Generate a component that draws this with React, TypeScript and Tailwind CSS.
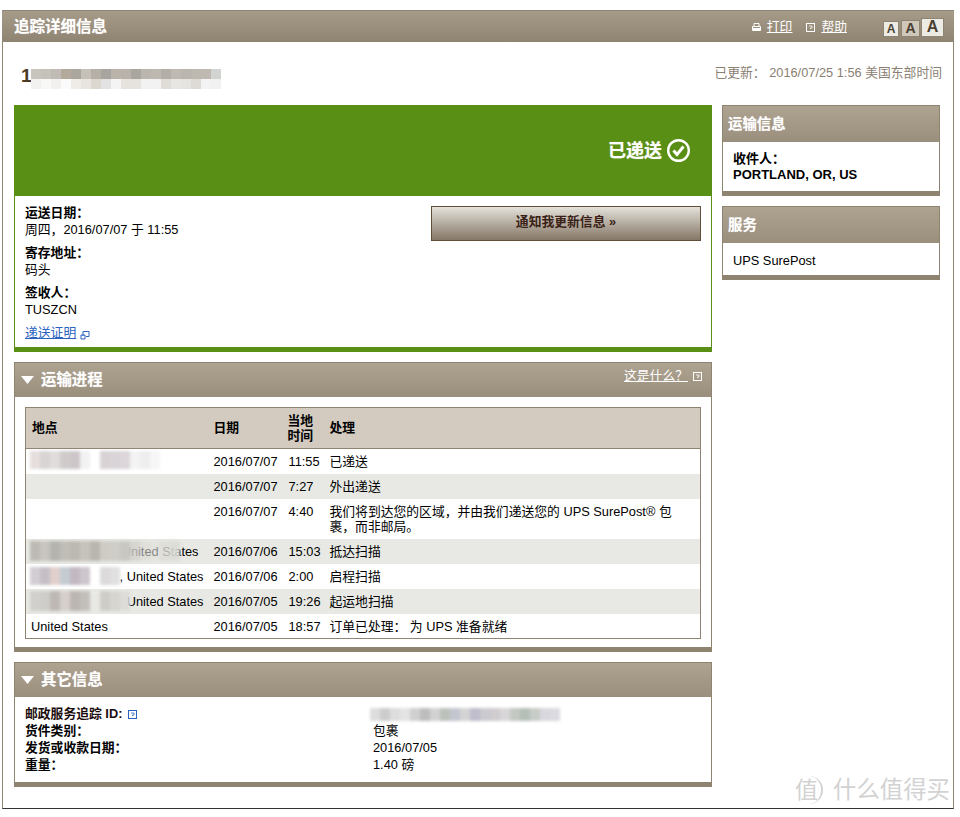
const FONT = "font-['Liberation_Sans','Noto_Sans_CJK_SC',sans-serif]"
const HEAD_TEXT = 'font-bold text-white [text-shadow:0_0_1px_rgba(255,255,255,0.5)]'

type Blur = { cells: string[]; className: string }

function Mosaic({ cells, className }: Blur) {
  return (
    <div className={`absolute flex ${className}`} aria-hidden>
      {cells.map((color, i) => (
        <div key={i} className={`h-full w-[10px] ${color}`} />
      ))}
    </div>
  )
}

function HelpIcon({ className }: { className?: string }) {
  return (
    <svg viewBox="0 0 9 9" className={`inline-block h-[9px] w-[9px] ${className ?? ''}`} aria-hidden>
      <rect x="0.5" y="0.5" width="8" height="8" fill="none" stroke="currentColor" />
      <path d="M3 3h3v2H4.500v1M4.500 7h0.100" fill="none" stroke="currentColor" strokeWidth="0.8" />
    </svg>
  )
}

function SectionHeader({ title }: { title: string }) {
  return (
    <div className="flex h-[35px] items-center gap-[7px] border-x border-t border-[#8f8372] bg-gradient-to-b from-[#aea391] to-[#9a8e7d] pl-[6px]">
      <svg viewBox="0 0 13 8" className="h-[8px] w-[13px]" aria-hidden>
        <path d="M0 0h13L6.500 8z" fill="#fff" />
      </svg>
      <span className={`text-[15.4px] ${HEAD_TEXT}`}>{title}</span>
    </div>
  )
}

function SideCard({ title, bodyClass, children }: { title: string; bodyClass: string; children: React.ReactNode }) {
  return (
    <div className="border-x border-b-[5px] border-[#8f8372]">
      <div className="flex h-[37px] items-center border-t border-[#8f8372] bg-gradient-to-b from-[#aea391] to-[#9a8e7d] pl-[5px]">
        <span className={`text-[14.4px] ${HEAD_TEXT}`}>{title}</span>
      </div>
      <div className={`bg-white px-[10px] ${bodyClass}`}>{children}</div>
    </div>
  )
}

function Detail({ label, value }: { label: string; value: string }) {
  return (
    <div>
      <div className="h-[16px] font-bold leading-[14px]">{label}</div>
      <div>{value}</div>
    </div>
  )
}

const rows = [
  { date: '2016/07/07', time: '11:55', act: '已递送', place: '', placeClass: '', h: 'h-[25px]', blur: 0 },
  { date: '2016/07/07', time: '7:27', act: '外出递送', place: '', placeClass: '', h: 'h-[25px]', blur: -1 },
  { date: '2016/07/07', time: '4:40', act: '我们将到达您的区域，并由我们递送您的 UPS SurePost® 包裹，而非邮局。', place: '', placeClass: '', h: 'h-[40px]', blur: -1 },
  { date: '2016/07/06', time: '15:03', act: '抵达扫描', place: ', United States', placeClass: 'text-right pr-[9px]', h: 'h-[25px]', blur: 1 },
  { date: '2016/07/06', time: '2:00', act: '启程扫描', place: ', United States', placeClass: 'text-right pr-[4px]', h: 'h-[25px]', blur: 2 },
  { date: '2016/07/05', time: '19:26', act: '起运地扫描', place: ', United States', placeClass: 'text-right pr-[4px]', h: 'h-[25px]', blur: 3 },
  { date: '2016/07/05', time: '18:57', act: '订单已处理： 为 UPS 准备就绪', place: 'United States', placeClass: '', h: 'h-[25px]', blur: -1 },
]

const blurs: Blur[] = [
  {
    className: 'left-[4px] top-[2px] h-[18px] blur-[1.5px]',
    cells: ['bg-[#e6dedd]', 'bg-[#d8d4d4]', 'bg-[#e0dcdc]', 'bg-[#d0cbcb]', 'bg-[#cdc6c8]', 'bg-[#f2f2f2]', 'bg-[#ffffff]', 'bg-[#d8d2d4]', 'bg-[#d8d4d8]', 'bg-[#dcd6da]', 'bg-[#f3f3f3]', 'bg-[#eeeeee]', 'bg-[#f6f6f6]'],
  },
  {
    className: 'left-[4px] top-[2px] h-[20px] blur-[1.5px]',
    cells: ['bg-[#bdb9b4]', 'bg-[#c8c5c0]', 'bg-[#b5b3ae]', 'bg-[#c0bdb7]', 'bg-[#bcb8b2]', 'bg-[#c6c2bc]', 'bg-[#b9b5af]', 'bg-[#cfccc6]', 'bg-[#cfcdc8]', 'bg-[#c9c7c2]', 'bg-[#d2d0cb]/80', 'bg-[#dad8d3]/60', 'bg-[#e0dfda]/60', 'bg-[#dcdbd6]/80', 'bg-[#dcdbd6]/90'],
  },
  {
    className: 'left-[4px] top-[3px] h-[18px] blur-[1.5px]',
    cells: ['bg-[#d2cdd2]', 'bg-[#c6c0c6]', 'bg-[#e0cfcc]', 'bg-[#c4ccd2]', 'bg-[#c2b8c2]', 'bg-[#cdc6cc]', 'bg-[#ffffff]', 'bg-[#dcdada]', 'bg-[#e0e0e0]'],
  },
  {
    className: 'left-[4px] top-[2px] h-[20px] blur-[1.5px]',
    cells: ['bg-[#d2d0cc]', 'bg-[#cfcdc9]', 'bg-[#bdb8b4]', 'bg-[#d6cfcb]', 'bg-[#bbb6b2]', 'bg-[#c2bfbb]', 'bg-[#e8e9e4]', 'bg-[#cfcdc8]', 'bg-[#d6d5d0]', 'bg-[#dedcd8]'],
  },
]

const idCells = ['bg-[#dddddd]', 'bg-[#cccccc]', 'bg-[#dddddd]', 'bg-[#e4e4e4]', 'bg-[#d0d0d0]', 'bg-[#bdbdbd]', 'bg-[#d2d2d2]', 'bg-[#bcc2bb]', 'bg-[#c3c6d0]', 'bg-[#d4d4d4]', 'bg-[#bfbccc]', 'bg-[#cacad0]', 'bg-[#d0ccd0]', 'bg-[#d8d6d8]', 'bg-[#c4c8c2]', 'bg-[#b5bfb8]', 'bg-[#c8ccc8]', 'bg-[#d8d8de]', 'bg-[#dadae0]']
const numTop = ['bg-[#c8c4be]', 'bg-[#c5c2bc]', 'bg-[#c0bbb4]', 'bg-[#b3aa9c]', 'bg-[#aba69e]', 'bg-[#c5c0b8]', 'bg-[#b6afa6]', 'bg-[#a8a5a0]', 'bg-[#bab3aa]', 'bg-[#b8b2aa]', 'bg-[#a9a69f]', 'bg-[#bab5ae]', 'bg-[#bdb8b0]', 'bg-[#b3afa8]', 'bg-[#bfb9b1]', 'bg-[#bab5ae]', 'bg-[#bdb8b0]', 'bg-[#bfb9b1]', 'bg-[#d2d4d2]']
const numBottom = ['bg-[#f2f2f0]', 'bg-[#f8f8f6]', 'bg-[#f2f1ef]', 'bg-[#fbfbfb]', 'bg-[#efece8]', 'bg-[#e8e5e0]', 'bg-[#dcd8d0]', 'bg-[#e2e2e2]', 'bg-[#f4f4f4]', 'bg-[#e6e3de]', 'bg-[#e6e3de]', 'bg-[#f2f2f2]', 'bg-[#f2f2f2]', 'bg-[#e0dcd8]', 'bg-[#e8e6e2]', 'bg-[#e6e4e0]', 'bg-[#dedbd6]', 'bg-[#f3f3f3]', 'bg-[#f1f1f1]']

export default function App() {
  return (
    <div className={`${FONT} relative h-[817px] w-[960px] bg-white pl-[2px] pt-[10px] text-[12.8px] leading-[16px] text-black`}>
      <div className="h-[799px] w-[952px] border-x border-b border-[#8f8372] border-b-[#333333]">
        {/* top bar */}
        <div className="-mx-px flex h-[32px] items-center justify-between border-t border-[#8f8372] bg-gradient-to-b from-[#a69b89] to-[#8f8372] pl-[12px] pr-[10px]">
          <span className={`text-[15.5px] ${HEAD_TEXT}`}>追踪详细信息</span>
          <div className="flex items-center text-white">
            <svg viewBox="0 0 9 8" className="mr-[6px] h-[8px] w-[9px]" aria-hidden>
              <path d="M2 .5h5v3H2zM.5 3.500h8v4h-8z" fill="none" stroke="#fff" />
              <path d="M1 5h7v2H1z" fill="#fff" />
            </svg>
            <a className="underline">打印</a>
            <HelpIcon className="ml-[14px] mr-[6px] mt-px text-white" />
            <a className="underline">帮助</a>
            <div className="ml-[36px] flex items-end font-bold text-[#4a4032]">
              <span className="mb-[-1px] flex h-[16px] w-[16px] items-center justify-center border border-[#8f8372] bg-[#ecebe4] text-[12px]">A</span>
              <span className="mb-[-1px] ml-[2px] flex h-[17px] w-[19px] items-center justify-center border border-[#8f8372] bg-[#cfc7ba] text-[14px]">A</span>
              <span className="mb-[-1px] ml-px flex h-[19px] w-[23px] items-center justify-center border border-[#8f8372] bg-[#ecebe4] text-[16px]">A</span>
            </div>
          </div>
        </div>

        <div className="pl-[11px]">
          {/* tracking number and timestamp */}
          <div className="relative flex h-[63px] items-start justify-between pr-[11px] pt-[23px]">
            <span className="pl-[7px] pt-[1px] text-[19px] font-bold leading-[20px] text-[#4b3b26]">1</span>
            <Mosaic cells={numTop} className="left-[17px] top-[27px] h-[10px] blur-[0.4px]" />
            <Mosaic cells={numBottom} className="left-[17px] top-[37px] h-[10px] blur-[0.4px]" />
            <span className="text-[#8a8072]">已更新： 2016/07/25 1:56 美国东部时间</span>
          </div>

          <div className="flex items-start gap-[10px]">
            <div className="flex w-[698px] flex-col gap-[10px]">
              {/* status card */}
              <div className="border-x border-b-[5px] border-[#5a8f15]">
                <div className="flex h-[91px] items-center justify-end gap-[5px] bg-[#5a8f15] pr-[21px]">
                  <span className={`text-[18px] ${HEAD_TEXT}`}>已递送</span>
                  <svg viewBox="0 0 23 23" className="h-[23px] w-[23px]" aria-hidden>
                    <circle cx="11.500" cy="11.500" r="10.300" fill="none" stroke="#fff" strokeWidth="2.400" />
                    <path d="M6.500 11.500l3.500 4 6.500-8" fill="none" stroke="#fff" strokeWidth="3" />
                  </svg>
                </div>
                <div className="relative flex h-[151px] justify-between bg-white px-[10px] pt-[10px]">
                  <div className="flex flex-col gap-[8px]">
                    <Detail label="运送日期：" value="周四，2016/07/07 于 11:55" />
                    <Detail label="寄存地址：" value="码头" />
                    <Detail label="签收人：" value="TUSZCN" />
                    <div className="-mt-px flex items-center gap-[4px] text-[#2a62c0]">
                      <a className="underline">递送证明</a>
                      <svg viewBox="0 0 10 10" className="mt-[3px] h-[10px] w-[10px]" aria-hidden>
                        <path d="M3 6V1.500h6v5H6M1 5h4v4H1z" fill="none" stroke="currentColor" />
                      </svg>
                    </div>
                  </div>
                  <button
                    type="button"
                    className="h-[35px] w-[270px] border border-[#5f4f3b] bg-gradient-to-b from-[#e4e2da] to-[#867868] pb-[3px] text-[12.8px] font-bold text-[#3a1f17]"
                  >
                    通知我更新信息 »
                  </button>
                </div>
              </div>

              {/* progress */}
              <div>
                <div className="relative">
                  <SectionHeader title="运输进程" />
                  <div className="absolute right-[10px] top-[6px] flex items-center gap-[5px] text-white">
                    <a className="underline">这是什么？</a>
                    <HelpIcon />
                  </div>
                </div>
                <div className="border-x border-b-[5px] border-[#8f8372] bg-white px-[10px] pb-[8px] pt-[10px]">
                  <table className="w-[676px] table-fixed border-collapse border border-[#8f8372]">
                    <colgroup>
                      <col className="w-[182px]" />
                      <col className="w-[75px]" />
                      <col className="w-[42px]" />
                      <col />
                    </colgroup>
                    <thead>
                      <tr className="h-[41px] border-b border-[#8f8372] bg-[#d3cbbf] text-left font-bold">
                        <th className="px-[6px]">地点</th>
                        <th className="px-[6px]">日期</th>
                        <th className="px-[5px] leading-[15px]">当地<br />时间</th>
                        <th className="px-[5px]">处理</th>
                      </tr>
                    </thead>
                    <tbody>
                      {rows.map((row, i) => (
                        <tr key={i} className={`${row.h} align-top ${i % 2 === 1 ? 'bg-[#e8e9e4]' : 'bg-white'}`}>
                          <td className="relative whitespace-nowrap pl-[5px] pt-[5px]">
                            <div className={row.placeClass}>{row.place}</div>
                            {row.blur >= 0 && <Mosaic {...blurs[row.blur]} />}
                          </td>
                          <td className="pl-[6px] pt-[5px]">{row.date}</td>
                          <td className="pl-[6px] pt-[5px]">{row.time}</td>
                          <td className="pl-[5px] pr-[20px] pt-[5px] leading-[15px]">{row.act}</td>
                        </tr>
                      ))}
                    </tbody>
                  </table>
                </div>
              </div>

              {/* other info */}
              <div>
                <SectionHeader title="其它信息" />
                <div className="relative grid h-[90px] grid-cols-[348px_1fr] content-start border-x border-b-[5px] border-[#8f8372] bg-white px-[10px] pt-[8px] leading-[17px]">
                  <div className="font-bold text-[#1c0d0d]">
                    邮政服务追踪 ID: <HelpIcon className="ml-[2px] text-[#2a62c0]" />
                  </div>
                  <div />
                  <div className="font-bold">货件类别：</div>
                  <div>包裹</div>
                  <div className="font-bold">发货或收款日期：</div>
                  <div>2016/07/05</div>
                  <div className="font-bold">重量：</div>
                  <div>1.40 磅</div>
                  <Mosaic cells={idCells} className="left-[355px] top-[11px] h-[13px] blur-[1.5px]" />
                </div>
              </div>
            </div>

            {/* right column */}
            <div className="flex w-[218px] flex-col gap-[10px]">
              <SideCard title="运输信息" bodyClass="h-[49px] pt-[9px] text-[13px] font-bold leading-[16px]">
                <div>收件人：</div>
                <div>PORTLAND, OR, US</div>
              </SideCard>
              <SideCard title="服务" bodyClass="h-[32px] pt-[10px] leading-[15px]">
                UPS SurePost
              </SideCard>
            </div>
          </div>
        </div>
      </div>

      {/* watermark */}
      <div className="absolute left-[795px] top-[776px] flex items-center gap-[10px] text-[#d2d2d2]">
        <span className="flex h-[28px] w-[28px] items-center justify-start rounded-full border-r-2 border-[#d2d2d2] text-[23px]">值</span>
        <span className="text-[23.4px] leading-[28px]">什么值得买</span>
      </div>
    </div>
  )
}
